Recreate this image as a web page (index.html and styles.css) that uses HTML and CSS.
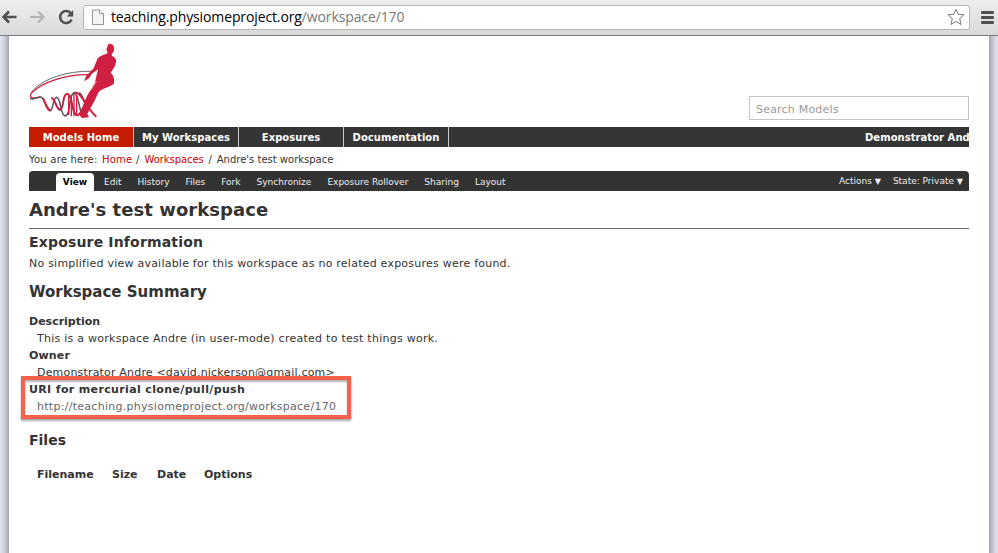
FILE: index.html
```html
<!DOCTYPE html>
<html lang="en">
<head>
<meta charset="utf-8">
<title>Andre's test workspace</title>
<link rel="stylesheet" href="styles.css">
</head>
<body>
<header class="toolbar">
  <svg class="icon-back" width="16" height="16" viewBox="0 0 16 16"><path d="M15.500 8H3M8 2.500L2.500 8L8 13.500" fill="none" stroke="#505050" stroke-width="2.600"/></svg>
  <svg class="icon-forward" width="16" height="16" viewBox="0 0 16 16"><path d="M0 8H13M8 2.500L13.500 8L8 13.500" fill="none" stroke="#b4b4b4" stroke-width="2.200"/></svg>
  <svg class="icon-reload" width="16" height="16" viewBox="0 0 16 16"><path d="M13 4.500A6 6 0 1 0 13.600 10.500" fill="none" stroke="#505050" stroke-width="2.500"/><path d="M15.200 1V7.500H8.700Z" fill="#505050"/></svg>
  <div class="address">
    <svg class="icon-page" width="12" height="16" viewBox="0 0 12 16"><path d="M.5 1H7.500L11.500 4.500V15.500H.5Z" fill="#f4f4f4" stroke="#969696"/><path d="M7.500 1V4.500H11.500" fill="#fff" stroke="#969696"/></svg>
    <span class="url">teaching.physiomeproject.org<span class="path">/workspace/170</span></span>
    <svg class="icon-star" width="18" height="18" viewBox="0 0 18 18"><path d="M9 1.200L11.200 6.300L17 6.700L12.700 10.600L14 16.500L9 13.500L4 16.500L5.300 10.600L1 6.700L6.800 6.300Z" fill="#fff" stroke="#777" stroke-linejoin="round"/></svg>
  </div>
  <div class="menu"><i></i><i></i><i></i></div>
</header>
<div class="backdrop">
<main class="page">
  <div class="masthead">
    <svg class="logo" width="88" height="76" viewBox="42 15 264 228">
      <g fill="none">
        <path d="M228 100C160 98 80 122 50 162" stroke="#666" stroke-width="3"/>
        <path d="M220 110C155 108 84 132 50 164C38 182 56 182 77 176" stroke="#cf2042" stroke-width="4"/>
        <path d="M46 180C50 190 64 176 78 178C92 182 91 214 104 218C116 220 112 181 125 178C140 182 134 231 151 234C169 230 159 168 178 164C194 172 190 222 206 236M192 164C208 172 208 202 216 214" stroke="#555" stroke-width="4.500"/>
        <path d="M84 180C94 206 99 215 108 218M109 179C121 182 121 207 134 216C150 211 139 170 157 167C176 173 168 233 188 232C207 224 208 180 232 156M178 164C199 160 212 208 244 236" stroke="#cf2042" stroke-width="6"/>
        <path d="M161 172V231M169 170V235M177 168V235M185 172V232" stroke="#cf2042" stroke-width="4"/>
      </g>
      <path d="M280 18C289 15 299 22 297 33C298 39 294 45 290 47L291 54C305 60 306 68 300 84L287 105C296 110 300 128 296 138C280 149 262 151 251 162L238 190L217 227L222 238L200 240L194 231L204 210L216 180L226 158L240 133L249 94L231 107L222 121L208 130L213 114L236 91L248 61L257 54L278 46L274 34Z" fill="#cf2042"/>
      <path d="M244 130C238 142 232 148 228 156" fill="none" stroke="#fff" stroke-width="1.500"/>
    </svg>
    <div class="search">Search Models</div>
  </div>
  <nav class="main-nav">
    <a class="current">Models Home</a><a>My Workspaces</a><a>Exposures</a><a>Documentation</a>
    <span class="user">Demonstrator And</span>
  </nav>
  <div class="crumbs"><span class="here">You are here:</span><a class="home">Home</a><span>/</span><a class="works">Workspaces</a><span>/</span><span>Andre's test workspace</span></div>
  <nav class="tabs">
    <a class="view">View</a><a>Edit</a><a>History</a><a>Files</a><a>Fork</a><a>Synchronize</a><a>Exposure Rollover</a><a>Sharing</a><a>Layout</a>
    <span class="actions">Actions <b>▼</b></span><span class="state">State: Private <b>▼</b></span>
  </nav>
  <h1>Andre's test workspace</h1>
  <h2 class="exposure">Exposure Information</h2>
  <p class="notice">No simplified view available for this workspace as no related exposures were found.</p>
  <h2 class="summary">Workspace Summary</h2>
  <dl>
    <dt>Description</dt>
    <dd>This is a workspace Andre (in user-mode) created to test things work.</dd>
    <dt class="owner">Owner</dt>
    <dd class="person">Demonstrator Andre &lt;david.nickerson@gmail.com&gt;</dd>
    <dt class="uri-label">URI for mercurial clone/pull/push</dt>
    <dd class="uri">http://teaching.physiomeproject.org/workspace/170</dd>
    <div class="highlight"></div>
  </dl>
  <h2 class="files">Files</h2>
  <div class="columns"><span class="c1">Filename</span><span class="c2">Size</span><span class="c3">Date</span><span>Options</span></div>
</main>
</div>
</body>
</html>
```

FILE: styles.css
```css
* { box-sizing: border-box; }
body { margin: 0; width: 998px; height: 553px; overflow: hidden; display: flex; flex-direction: column; font: 11px "DejaVu Sans", sans-serif; color: #333; }
svg { display: block; flex: none; }
.toolbar { height: 36px; flex: none; display: flex; align-items: center; padding-bottom: 1px; border-bottom: 1px solid #7b7b7b; background: linear-gradient(#eee, #d9d9d9); }
.icon-back { margin-left: 1px; }
.icon-forward { margin-left: 13px; }
.icon-reload { margin-left: 12px; }
.address { width: 887px; height: 25px; margin-left: 9px; border: 1px solid #b5b5b5; border-radius: 3px; background: #fff; display: flex; align-items: center; padding: 0 4px 0 8px; }
.url { margin-left: 7px; font: 14px/20px "Open Sans", sans-serif; letter-spacing: -.12px; color: #000; white-space: nowrap; }
.path { color: #777; }
.icon-star { margin-left: auto; }
.menu { margin-left: 11px; display: grid; gap: 2px; }
.menu i { width: 13px; height: 3px; border-radius: 1px; background: #505050; }
.backdrop { flex: 1; padding: 0 9px; background: linear-gradient(90deg, #e1e5f0 0, #d2d5df 4px, #a0a2ab 9px, #a0a2ab 989px, #d2d2df 994px, #e2e2f0 998px); }
.page { width: 980px; height: 517px; background: #fff; padding: 0 20px; }
.masthead { height: 91px; display: flex; justify-content: space-between; padding-top: 7px; }
.search { width: 220px; height: 24px; margin-top: 53px; border: 1px solid #c4c4c4; padding-left: 6px; font-size: 11px; line-height: 25px; letter-spacing: .2px; color: #999; }
.main-nav { height: 20px; display: flex; background: #353535; overflow: hidden; font-weight: bold; font-size: 10px; line-height: 21px; letter-spacing: .05px; color: #fff; white-space: nowrap; }
.main-nav a { width: 105px; flex: none; border-right: 1px solid #ccc; text-align: center; }
.main-nav .current { background: #c51b00; }
.user { width: 104px; margin-left: auto; flex: none; }
.crumbs { height: 24px; display: flex; gap: 5px; font-size: 10px; line-height: 25px; white-space: nowrap; }
.crumbs a { color: #c00; }
.here { width: 68px; letter-spacing: .22px; }
.home { width: 29px; letter-spacing: .2px; }
.works { width: 59px; letter-spacing: -.05px; }
.tabs { height: 20px; display: flex; padding-left: 27px; border-radius: 4px 4px 0 0; background: #333; font-size: 9px; line-height: 22px; color: #eee; white-space: nowrap; }
.tabs a { margin-right: 16px; }
.tabs .view { width: 38px; height: 18px; margin: 2px 10px 0 0; border-radius: 4px 4px 0 0; background: #fff; color: #000; font-weight: bold; line-height: 18px; text-align: center; }
.tabs b { font-size: 8px; }
.actions, .state { line-height: 21px; }
.actions { margin-left: auto; }
.state { margin: 0 6px 0 12px; }
h1, h2, p, dl, dd { margin: 0; }
h1 { height: 38px; border-bottom: 1px solid #666; font-size: 18px; line-height: 37px; letter-spacing: .05px; }
h2 { font-size: 14px; }
.exposure { height: 26px; line-height: 27px; letter-spacing: .17px; }
.notice { height: 20px; line-height: 17px; letter-spacing: .23px; }
.summary { height: 38px; font-size: 15px; line-height: 35px; }
dl { position: relative; line-height: 17px; white-space: nowrap; }
dt { height: 17px; font-weight: bold; }
dd { height: 17px; padding-left: 8px; letter-spacing: .26px; }
.owner { letter-spacing: .15px; }
.person { letter-spacing: .18px; }
.uri-label { letter-spacing: .36px; }
.uri { color: #666; letter-spacing: .28px; }
.highlight { position: absolute; left: -8px; top: 63px; width: 330px; height: 43px; border: 4px solid #fd604a; box-shadow: 0 2px 2px rgba(0,0,0,.35), inset 0 2px 2px rgba(0,0,0,.3); }
.files { height: 48px; padding-top: 16px; line-height: 18px; }
.columns { display: flex; padding-left: 8px; font-weight: bold; line-height: 24px; }
.c1 { width: 75px; }
.c2 { width: 45px; }
.c3 { width: 47px; }
```
